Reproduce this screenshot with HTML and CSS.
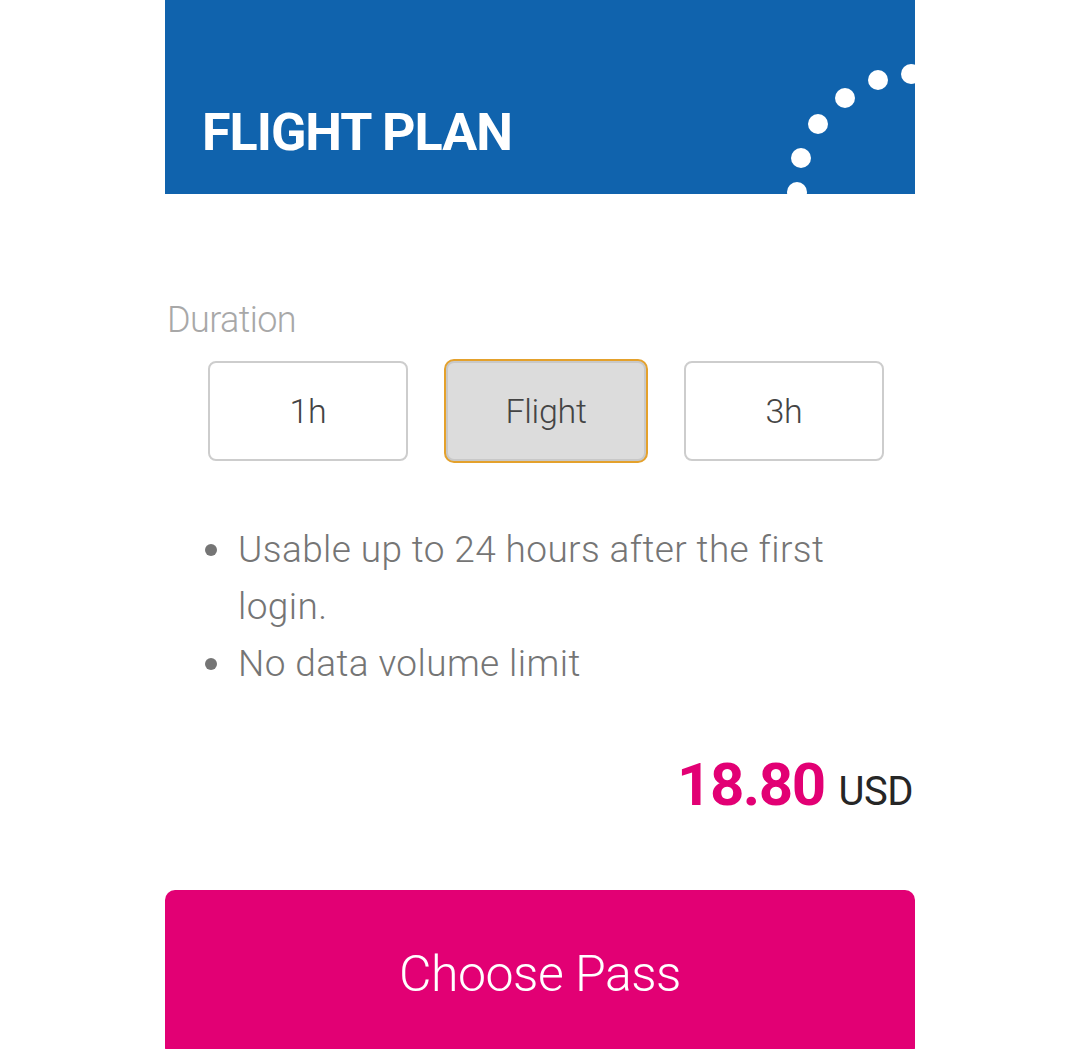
FILE: index.html
```html
<!DOCTYPE html>
<html>
<head>
<meta charset="utf-8">
<link rel="stylesheet" href="styles.css">
</head>
<body>
<div class="page">
  <header class="banner">
    <h1 class="title">FLIGHT PLAN</h1>
    <svg class="dots" width="140" height="194" viewBox="0 0 140 194" aria-hidden="true">
      <g fill="#fff">
        <circle cx="22" cy="192" r="10"/>
        <circle cx="26" cy="158" r="10"/>
        <circle cx="43" cy="124" r="10"/>
        <circle cx="70" cy="98" r="10"/>
        <circle cx="103" cy="80" r="10"/>
        <circle cx="136" cy="74" r="10"/>
      </g>
    </svg>
  </header>

  <div class="label">Duration</div>
  <div class="options">
    <div class="opt">1h</div>
    <div class="opt selected">Flight</div>
    <div class="opt">3h</div>
  </div>

  <ul class="features">
    <li>Usable up to 24 hours after the first login.</li>
    <li>No data volume limit</li>
  </ul>

  <div class="price"><span class="amount">18.80</span><span class="cur">USD</span></div>

  <button class="cta">Choose Pass</button>
</div>
</body>
</html>
```
FILE: styles.css
```css
html, body {
  margin: 0;
  padding: 0;
  background: #fff;
  overflow: hidden;
}
body {
  font-family: Roboto, "Liberation Sans", sans-serif;
}
.page {
  width: 750px;
  margin-left: 165px;
}
.banner {
  position: relative;
  height: 194px;
  background: #1063ad;
  overflow: hidden;
  display: flex;
  align-items: flex-end;
}
.title {
  margin: 0 0 31px 37px;
  color: #fff;
  font-size: 52px;
  font-weight: 700;
  letter-spacing: -1px;
  line-height: 60px;
}
.dots {
  position: absolute;
  right: 0;
  top: 0;
}
.label {
  margin-top: 104px;
  margin-left: 2px;
  font-size: 36px;
  font-weight: 300;
  color: #a8a8a8;
  letter-spacing: -0.6px;
  line-height: 44px;
}
.options {
  display: flex;
  gap: 38px;
  margin-top: 19px;
  padding-left: 43px;
}
.opt {
  box-sizing: border-box;
  width: 200px;
  height: 100px;
  border: 2px solid #cdcdcd;
  border-radius: 8px;
  display: flex;
  align-items: center;
  justify-content: center;
  font-size: 34px;
  font-weight: 300;
  color: #444;
  letter-spacing: -0.3px;
}
.opt.selected {
  background: #dcdcdc;
  border-color: #c8c8c8;
  box-shadow: 0 0 0 2px #e4a12c;
}
.features {
  margin: 60px 0 0 0;
  padding: 0 75px 0 73px;
  list-style: none;
  font-size: 37px;
  font-weight: 300;
  color: #757575;
  line-height: 57px;
  letter-spacing: 0.4px;
}
.features li {
  position: relative;
}
.features li::before {
  content: "";
  position: absolute;
  left: -33px;
  top: 23px;
  width: 12px;
  height: 12px;
  border-radius: 50%;
  background: #757575;
}
.price {
  margin-top: 58px;
  text-align: right;
  line-height: 70px;
  padding-right: 2px;
}
.amount {
  font-size: 60px;
  font-weight: 700;
  color: #e20074;
  letter-spacing: -1.5px;
}
.cur {
  margin-left: 14px;
  font-size: 40px;
  font-weight: 400;
  color: #262626;
  letter-spacing: -0.5px;
}
.cta {
  display: block;
  margin-top: 55px;
  width: 750px;
  height: 168px;
  border: none;
  border-radius: 10px;
  background: #e20074;
  color: #fff;
  font-family: Roboto, "Liberation Sans", sans-serif;
  font-size: 50px;
  font-weight: 300;
  letter-spacing: -0.5px;
}
```
